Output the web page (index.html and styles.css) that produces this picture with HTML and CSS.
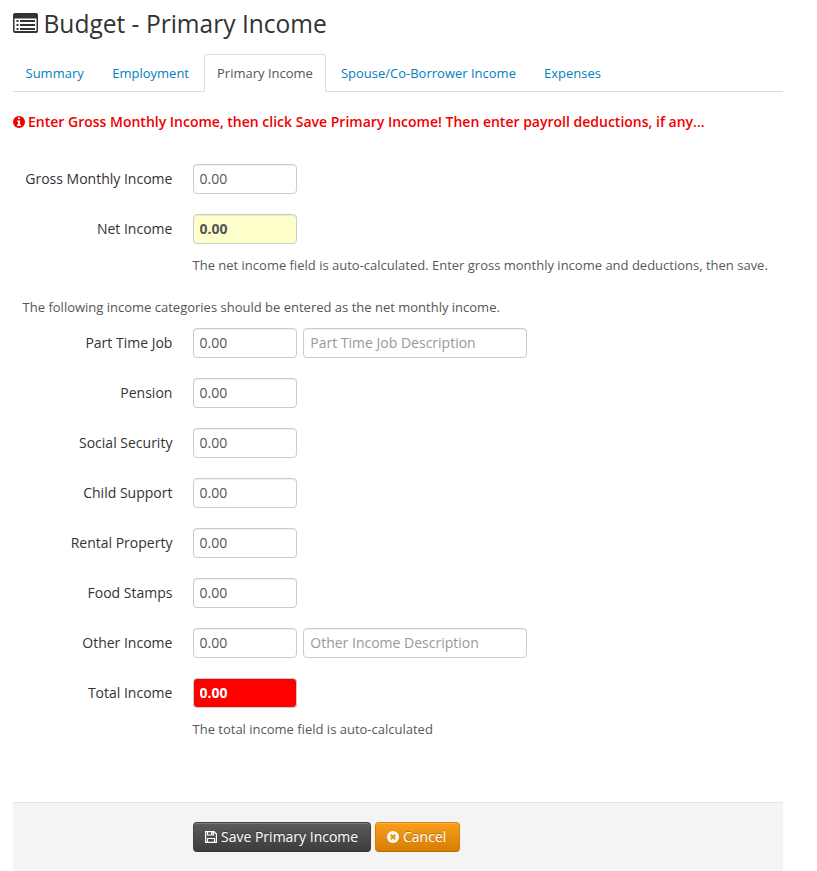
FILE: index.html
```html
<!DOCTYPE html>
<html lang="en">
<head>
<meta charset="utf-8">
<title>Budget - Primary Income</title>
<link rel="stylesheet" href="styles.css">
</head>
<body>
<main class="page">
<h1 class="title"><svg class="title-icon" viewBox="0 0 25 20"><path fill="#333" fill-rule="evenodd" d="M2 0h21a2 2 0 0 1 2 2v16a2 2 0 0 1-2 2H2a2 2 0 0 1-2-2V2a2 2 0 0 1 2-2zM1.500 5.500v12.500h22V5.500z"/><path fill="#333" d="M3.500 7h2v2h-2zM7 7h15v2H7zM3.500 11h2v2h-2zM7 11h15v2H7zM3.500 15h2v2h-2zM7 15h15v2H7z"/></svg><span>Budget - Primary Income</span></h1>
<nav class="tabs">
<a class="tab">Summary</a><a class="tab">Employment</a><a class="tab active">Primary Income</a><a class="tab">Spouse/Co-Borrower Income</a><a class="tab">Expenses</a>
</nav>
<p class="alert"><svg class="alert-icon" viewBox="0 0 12 12"><circle cx="6" cy="6" r="6" fill="#f00000"/><path fill="#fff" d="M5 1.500h2V3H5zM4 4.500h3V8.500h1V10H4V8.500h1V5.500H4z"/></svg><span>Enter Gross Monthly Income, then click Save Primary Income! Then enter payroll deductions, if any...</span></p>
<form class="form">
<div class="row"><label>Gross Monthly Income</label><input value="0.00"></div>
<div class="row"><label>Net Income</label><input class="net" value="0.00"></div>
<p class="help net-help">The net income field is auto-calculated. Enter gross monthly income and deductions, then save.</p>
<p class="note">The following income categories should be entered as the net monthly income.</p>
<div class="row"><label>Part Time Job</label><input value="0.00"><input class="desc" placeholder="Part Time Job Description"></div>
<div class="row"><label>Pension</label><input value="0.00"></div>
<div class="row"><label>Social Security</label><input value="0.00"></div>
<div class="row"><label>Child Support</label><input value="0.00"></div>
<div class="row"><label>Rental Property</label><input value="0.00"></div>
<div class="row"><label>Food Stamps</label><input value="0.00"></div>
<div class="row"><label>Other Income</label><input value="0.00"><input class="desc" placeholder="Other Income Description"></div>
<div class="row"><label>Total Income</label><input class="total" value="0.00"></div>
<p class="help">The total income field is auto-calculated</p>
<div class="actions">
<button type="button" class="btn save"><svg class="save-icon" viewBox="0 0 12 12"><path fill="none" stroke="#fff" stroke-width="1.200" d="M.6.6h8.400l2.400 2.400v8.400H.6z"/><path fill="none" stroke="#fff" stroke-width="1.200" d="M2.500.500v3.500h6V.500M2.500 11.500v-4h7v4"/><path fill="#fff" d="M6 1h1.500v2.500H6z"/></svg><span>Save Primary Income</span></button>
<button type="button" class="btn cancel"><svg class="cancel-icon" viewBox="0 0 12 12"><circle cx="6" cy="6" r="6" fill="#fff"/><path stroke="#ec9410" stroke-width="2" d="M3.700 3.700l4.600 4.600M8.300 3.700l-4.600 4.600"/></svg><span>Cancel</span></button>
</div>
</form>
</main>
</body>
</html>
```
FILE: styles.css
```css
* { box-sizing: border-box; }
body { margin: 0; background: #fff; color: #333; font: 14px/20px "Open Sans", sans-serif; }
.page { width: 770px; margin-left: 13px; }
.title { display: flex; align-items: center; height: 48px; margin: 0; gap: 5.500px; font-size: 24.540px; font-weight: 400; line-height: 48px; }
.title-icon { width: 25px; height: 20px; margin-top: -2px; }
.tabs { display: flex; height: 44px; padding-top: 6px; border-bottom: 1px solid #ddd; font-size: 13px; }
.tab { height: 38px; padding: 8px 12px; margin-right: 2px; border: 1px solid transparent; color: #0480be; border-radius: 4px 4px 0 0; white-space: nowrap; }
.active { color: #555; background: #fff; border-color: #ddd #ddd #fff; }
.tab:first-child { padding-left: 11.500px; padding-right: 12.500px; }
.alert { display: flex; align-items: center; gap: 3.500px; height: 20px; margin: 20px 0 32px -.5px; color: #f00000; font-weight: 600; white-space: nowrap; }
.alert-icon { width: 12px; height: 12px; }
.form { margin: 0; }
.row { display: flex; height: 30px; margin-bottom: 20px; }
.row label { width: 160px; margin-right: 20px; padding: 5px .6px 0 0; text-align: right; white-space: nowrap; }
.row input { width: 104px; height: 30px; padding: 3px 6px 5px 5.500px; border: 1px solid #ccc; border-radius: 4px; color: #555; background: #fff; font: inherit; box-shadow: inset 0 1px 1px rgba(0,0,0,.075); }
.row .desc { width: 224px; margin-left: 6px; padding-left: 6.300px; }
.desc::placeholder { color: #999; }
.row .net { background: #ffc; font-weight: 700; }
.row .total { background: red; color: #fff; font-weight: 700; }
.help { height: 20px; margin: -9px 0 0 179.500px; color: #595959; font-size: 13px; }
.note { height: 20px; margin: 22px 0 11px 9.600px; color: #555; font-size: 13px; }
.actions { display: flex; gap: 4px; height: 69px; margin-top: 63px; padding: 19px 0 0 180px; background: #f4f4f4; border-top: 1px solid #e5e5e5; }
.btn { display: flex; align-items: center; height: 30px; padding: 0 11px; gap: 4px; border: 1px solid; border-radius: 4px; color: #fff; font: inherit; text-shadow: 0 -1px 0 rgba(0,0,0,.25); box-shadow: inset 0 1px 0 rgba(255,255,255,.2); white-space: nowrap; }
.save { width: 178px; background: linear-gradient(#5b5b5b, #3c3c3c); border-color: #444 #444 #333; }
.cancel { width: 85px; background: linear-gradient(#f89f1b, #d67e05); border-color: #dc8510 #d67e05 #b56b00; }
.save-icon, .cancel-icon { width: 12px; height: 12px; flex: none; }
```
